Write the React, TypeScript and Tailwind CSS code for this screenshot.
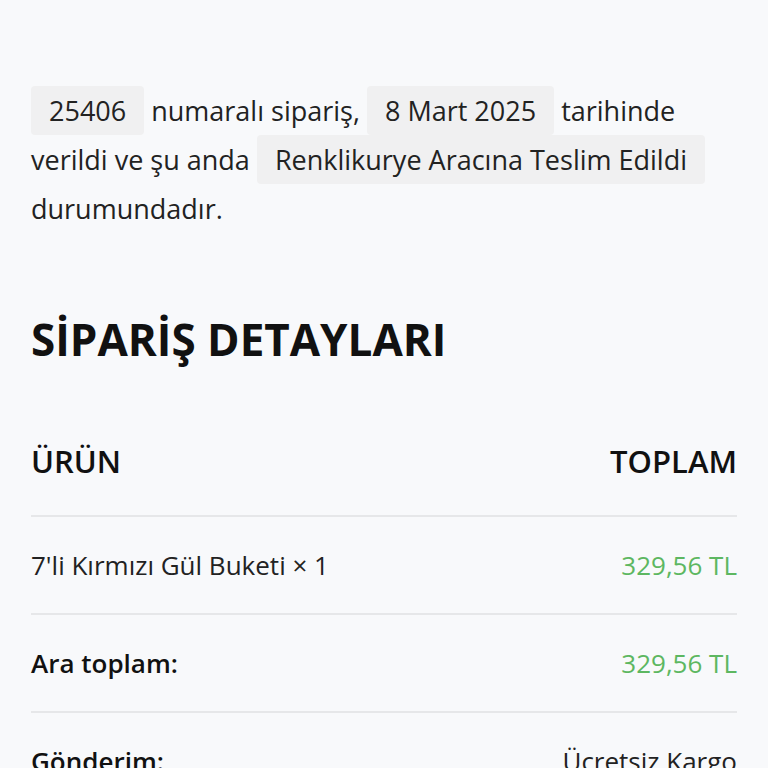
const mark = "rounded-sm bg-[#f0f0f1] px-[18px] py-[6px] text-[#222]";

function Row({ label, value, strong, green }: { label: string; value: string; strong?: boolean; green?: boolean }) {
  return (
    <div className="flex h-[98px] items-center justify-between border-b-2 border-[#e6e7e9] text-[26px]">
      <span className={strong ? "font-semibold text-[#111]" : "text-[#222]"}>{label}</span>
      <span className={green ? "text-[#5db761]" : "text-[#222]"}>{value}</span>
    </div>
  );
}

export default function App() {
  return (
    <div
      className="min-h-screen bg-[#f8f9fb] px-[31px] text-[27px] text-[#222]"
      style={{ fontFamily: '"Open Sans", "Noto Sans", sans-serif' }}
    >
      <div className="h-[86px]" />
      {/* order status text */}
      <p className="leading-[49px]">
        <mark className={mark}>25406</mark> numaralı sipariş, <mark className={mark}>8 Mart 2025</mark> tarihinde
        verildi ve şu anda <mark className={mark}>Renklikurye Aracına Teslim Edildi</mark> durumundadır.
      </p>

      <h2 className="mt-[80px] text-[44px] font-bold leading-[53px] text-[#111]">SİPARİŞ DETAYLARI</h2>

      {/* table */}
      <div className="mt-[77px]">
        <div className="flex items-center justify-between border-b-2 border-[#e6e7e9] pb-[36px] text-[31px] font-semibold leading-[36px] text-[#111]">
          <span>ÜRÜN</span>
          <span>TOPLAM</span>
        </div>
        <Row label="7'li Kırmızı Gül Buketi × 1" value="329,56 TL" green />
        <Row label="Ara toplam:" value="329,56 TL" strong green />
        <Row label="Gönderim:" value="Ücretsiz Kargo" strong />
      </div>
    </div>
  );
}
